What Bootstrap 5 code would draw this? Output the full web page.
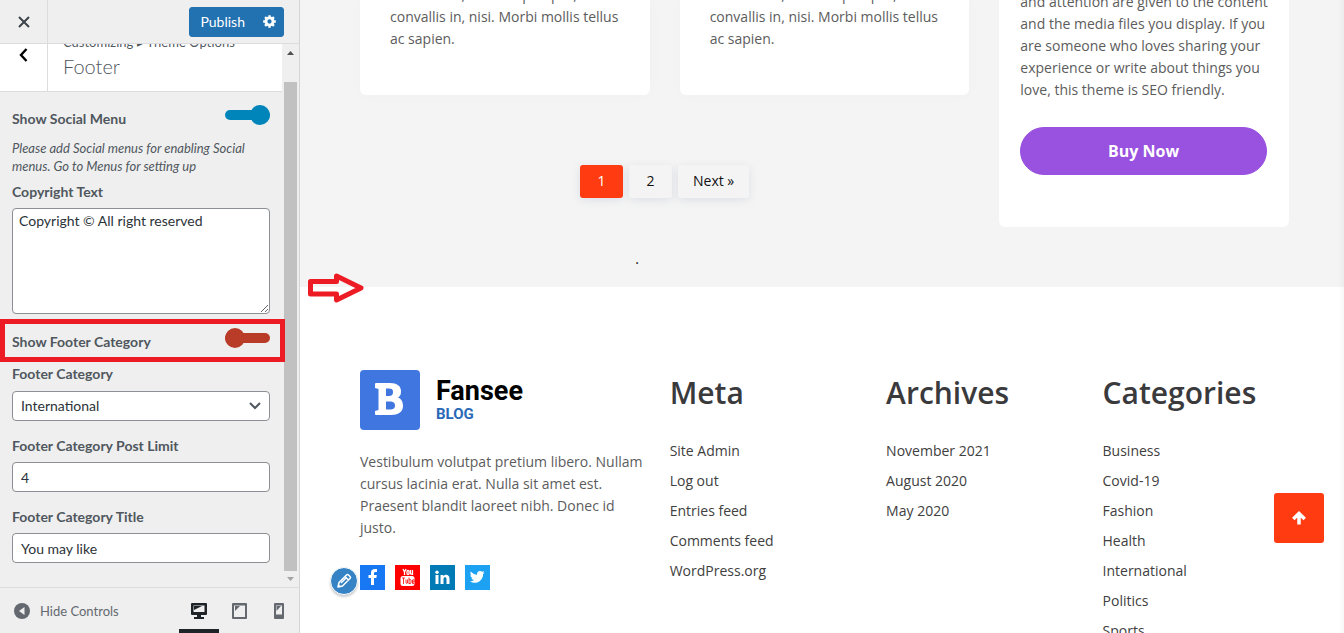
<!doctype html>
<html lang="en">
<head>
<meta charset="utf-8">
<meta name="viewport" content="width=device-width, initial-scale=1">
<title>Customize: Footer</title>
<link href="https://cdn.jsdelivr.net/npm/bootstrap@5.3.0/dist/css/bootstrap.min.css" rel="stylesheet">
<style>
body { font: 14px/22px "Open Sans", sans-serif; color: #5c5c5c; }
a { text-decoration: none; color: inherit; }
svg { display: block; }

/* Customizer panel */
.panel { flex: 0 0 300px; font: 14px/18px Lato, sans-serif; color: #50575e; background: #efefef; border-right: 1px solid #d5d5d5; }
.panel-head { height: 44px; border-bottom: 1px solid #dcdcde; padding-right: 15px; }
.side-btn { width: 48px; border: 0; border-right: 1px solid #dcdcde; background: transparent; color: #3c434a; padding: 0; display: flex; justify-content: center; }
.publish { --bs-btn-bg: #2271b1; --bs-btn-border-color: #2271b1; --bs-btn-border-radius: 3px; --bs-btn-color: #fff; --bs-btn-font-size: 14px; --bs-btn-padding-y: 0; height: 30px; line-height: 28px; }
.publish-text { --bs-btn-padding-x: 10px; }
.publish-gear { --bs-btn-padding-x: 7px; }
.section-title { height: 48px; background: #fff; border-bottom: 1px solid #dcdcde; }
.section-title h1 { font-size: 20px; line-height: 26px; font-weight: 300; }
.title-text { padding: 0 15px 8px; }
.crumbs { font-size: 13px; line-height: 18px; margin-bottom: 2px; }
.controls { padding: 13px 12px 0; }
.setting { font-weight: 700; display: block; margin: 0 0 7px; line-height: 18px; }
.toggle-label { margin: 0; padding-top: 5px; }
.note { font-size: 13px; font-style: italic; white-space: nowrap; margin: 11px 0 8px; }
.field.form-control, .field.form-select { font-size: 14px; line-height: 18px; border: 1px solid #8c8f94; border-radius: 4px; color: #2c3338; padding: 5px 8px; height: 30px; }
.field.form-select { margin-top: 8px; background-position: right 8px center; background-size: 12px 12px; --bs-form-select-bg-img: url("data:image/svg+xml,%3csvg xmlns='http://www.w3.org/2000/svg' viewBox='0 0 12 12'%3e%3cpath fill='none' stroke='%2350575e' stroke-width='2' d='M1 3l5 5 5-5'/%3e%3c/svg%3e"); }
textarea.field.form-control { height: 106px; padding: 3px 6px; resize: vertical; }
.toggle { appearance: none; position: relative; width: 45px; height: 20px; margin: 0; color: #b93c29; }
.toggle::before { content: ""; position: absolute; inset: 5px 0; border-radius: 5px; background: currentColor; }
.toggle::after { content: ""; position: absolute; inset: 0 auto 0 0; width: 20px; border-radius: 50%; background: currentColor; }
.toggle:checked { color: #0085ba; }
.toggle:checked::after { inset: 0 0 0 auto; }
.marked { height: 43px; padding-top: 9px; margin: 5px 0 3px; z-index: 2; }
.mark-box { position: absolute; inset: 0 -15px 0 -12px; border: 5px solid #ed1c24; pointer-events: none; }
.bar { width: 17px; color: #505050; }
.bar-thumb { width: 13px; background: #c1c1c1; }
.panel-foot { height: 46px; border-top: 1px solid #dcdcde; font-size: 13px; color: #646970; }
.hide-link { gap: 10px; padding-left: 14px; }
.device { width: 40px; border: 0; background: transparent; color: #646970; padding: 0; display: flex; justify-content: center; align-items: center; }
.device.chosen { color: #1d2327; box-shadow: inset 0 -4px #1d2327; }

/* Site preview */
.preview { min-width: 0; background: #fff; }
.preview::after { content: ""; position: absolute; inset: 0 0 0 auto; width: 6px; background: linear-gradient(90deg, transparent, rgba(0,0,0,.03)); }
.posts { background: #f4f4f4; height: 287px; padding: 0 55px 0 60px; }
.posts-grid { display: grid; grid-template-columns: repeat(3, minmax(0, 1fr)); column-gap: 30px; }
.posts-main { grid-column: span 2; }
.post-pair { display: grid; grid-template-columns: 1fr 1fr; column-gap: 30px; }
.tile { background: #fff; border-radius: 0 0 6px 6px; overflow: hidden; display: flex; flex-direction: column; justify-content: flex-end; white-space: nowrap; }
.tile p { margin: 0; }
.post-tile { height: 95px; padding: 0 30px 45px; box-shadow: 0 0 18px rgba(0,0,0,.02); }
.promo-tile { height: 227px; padding: 0 22px 52px 21px; }
.buy { --bs-btn-bg: #9951e0; --bs-btn-border-color: #9951e0; --bs-btn-color: #fff; --bs-btn-font-size: 16px; --bs-btn-font-weight: 700; --bs-btn-border-radius: 24px; height: 48px; margin-top: 26px; flex: none; }
.pages { gap: 6px; margin-top: 70px; }
.pages .page-item .page-link { font-size: 14px; line-height: 22px; padding: 5px 15px; height: 33px; min-width: 43px; margin: 0; text-align: center; border: 0; border-radius: 3px; background: #f4f4f4; color: #111; box-shadow: 0 2px 8px rgba(80,90,140,.13); }
.pages .page-item.active .page-link { background: #ff3b12; color: #fff; }
.stray { color: #111; text-align: center; margin: 53px 55px 0 0; line-height: 16px; }
.site-foot { display: grid; grid-template-columns: 3fr 2fr 2fr 2fr; column-gap: 30px; padding: 83px 55px 0 60px; }
.site-foot > * { min-width: 0; }
.logo-text { padding-top: 7px; }
.logo-name { font: 700 27px/28px Roboto, sans-serif; color: #000; }
.logo-sub { font: 700 15px/18px Roboto, sans-serif; color: #2a69b8; }
.about { white-space: nowrap; margin: 21px 0 26px; }
.site-foot h2 { font: 600 30px/36px "Open Sans", sans-serif; color: #3a3a3d; margin: 5px 0 29px; }
.links { list-style: none; padding: 0; margin: 0; display: grid; gap: 8px; color: #404040; }
.social { gap: 10px; }
.edit { position: absolute; left: -30px; top: 2px; width: 28px; height: 28px; border: 1px solid #fff; border-radius: 50%; background: #3582c4; padding: 0; box-shadow: 0 2px 2px rgba(60,67,74,.25); display: grid; place-items: center; }
.to-top { position: absolute; right: 20px; bottom: 90px; width: 50px; height: 50px; background: #ff3b12; border: 0; border-radius: 3px; display: grid; place-items: center; }
.pointer { position: absolute; left: 7px; top: 272px; z-index: 2; }
</style>
</head>
<body>
<div class="d-flex vh-100 overflow-hidden">
  <aside class="panel d-flex flex-column">
    <header class="panel-head d-flex flex-shrink-0">
      <button class="side-btn align-items-center" aria-label="Close"><svg width="12" height="12" viewBox="0 0 12 12" stroke="currentColor" stroke-width="2"><path d="M1 1l10 10M11 1L1 11"/></svg></button>
      <div class="btn-group ms-auto align-self-center">
        <button class="btn publish publish-text">Publish</button>
        <button class="btn publish publish-gear" aria-label="Publish settings"><svg width="13" height="13" viewBox="0 0 14 14"><circle cx="7" cy="7" r="3.8" fill="none" stroke="#fff" stroke-width="3"/><path stroke="#fff" stroke-width="2.6" d="M7 .2v3M7 10.800v3M.2 7h3M10.800 7h3M2.200 2.200l2 2M9.800 9.800l2 2M11.800 2.200l-2 2M4.200 9.800l-2 2"/></svg></button>
      </div>
    </header>

    <div class="d-flex flex-grow-1 overflow-hidden">
      <div class="flex-grow-1">
        <div class="section-title d-flex">
          <button class="side-btn align-items-start pt-1" aria-label="Back"><svg width="9" height="14" viewBox="0 0 9 14" fill="none" stroke="#000" stroke-width="2.400"><path d="M7.500 1L2 7l5.500 6"/></svg></button>
          <div class="title-text d-flex flex-column justify-content-end overflow-hidden">
            <span class="crumbs flex-shrink-0">Customizing ▸ Theme Options</span>
            <h1 class="mb-1 flex-shrink-0">Footer</h1>
          </div>
        </div>
        <form class="controls">
          <div class="d-flex justify-content-between">
            <label class="setting toggle-label" for="social">Show Social Menu</label>
            <input class="toggle" type="checkbox" id="social" checked>
          </div>
          <p class="note">Please add Social menus for enabling Social<br>menus. Go to Menus for setting up</p>
          <label class="setting" for="copy">Copyright Text</label>
          <textarea class="form-control field" id="copy">Copyright © All right reserved</textarea>
          <div class="marked position-relative d-flex justify-content-between">
            <label class="setting toggle-label" for="footcat">Show Footer Category</label>
            <input class="toggle" type="checkbox" id="footcat">
            <span class="mark-box"></span>
          </div>
          <label class="setting" for="cat">Footer Category</label>
          <select class="form-select field" id="cat"><option>International</option></select>
          <label class="setting mt-3" for="limit">Footer Category Post Limit</label>
          <input class="form-control field" id="limit" value="4">
          <label class="setting mt-3" for="title">Footer Category Title</label>
          <input class="form-control field" id="title" value="You may like">
        </form>
      </div>
      <div class="bar d-flex flex-column align-items-center flex-shrink-0 pt-1">
        <svg width="7" height="10" viewBox="0 0 7 10"><path fill="currentColor" d="M0 7l3.500-4L7 7z"/></svg>
        <div class="bar-thumb flex-grow-1 mt-4"></div>
        <svg width="7" height="16" viewBox="0 0 7 16"><path fill="#a3a3a3" d="M0 6l3.500 4L7 6z"/></svg>
      </div>
    </div>

    <footer class="panel-foot d-flex flex-shrink-0 align-items-stretch">
      <a href="#" class="hide-link d-flex align-items-center me-auto"><svg width="16" height="16" viewBox="0 0 16 16"><circle cx="8" cy="8" r="8" fill="#646970"/><path fill="#efefef" d="M10.500 4v8L5 8z"/></svg>Hide Controls</a>
      <button class="device chosen" aria-label="Desktop"><svg width="16" height="16" viewBox="0 0 16 16" fill="currentColor"><path fill-rule="evenodd" d="M0 1q0-1 1-1h14q1 0 1 1v10q0 1-1 1H1q-1 0-1-1zM2.500 2.500v6.500h11V2.500z"/><path d="M3 3h8L3 7zM6 12h4v2h3v2H3v-2h3z"/></svg></button>
      <button class="device" aria-label="Tablet"><svg width="15" height="16" viewBox="0 0 15 16" fill="currentColor"><path fill-rule="evenodd" d="M0 1q0-1 1-1h13q1 0 1 1v14q0 1-1 1H1q-1 0-1-1zM2 2.500v11.500h11V2.500z"/><path d="M3 3h5L3 8z"/></svg></button>
      <button class="device" aria-label="Mobile"><svg width="10" height="16" viewBox="0 0 10 16" fill="currentColor"><path fill-rule="evenodd" d="M0 1q0-1 1-1h8q1 0 1 1v14q0 1-1 1H1q-1 0-1-1zM2 2.500v9h6v-9z"/><path d="M2.500 3H7L2.500 8z"/></svg></button>
    </footer>
  </aside>

  <main class="preview flex-grow-1 position-relative overflow-hidden">
    <section class="posts">
      <div class="posts-grid">
        <div class="posts-main">
          <div class="post-pair">
            <article class="tile post-tile"><p>faucibus at, scelerisque quis,<br>convallis in, nisi. Morbi mollis tellus<br>ac sapien.</p></article>
            <article class="tile post-tile"><p>faucibus at, scelerisque quis,<br>convallis in, nisi. Morbi mollis tellus<br>ac sapien.</p></article>
          </div>
          <nav aria-label="Posts"><ul class="pagination pages justify-content-center mb-0">
            <li class="page-item active"><a class="page-link" href="#">1</a></li>
            <li class="page-item"><a class="page-link" href="#">2</a></li>
            <li class="page-item"><a class="page-link" href="#">Next »</a></li>
          </ul></nav>
          <p class="stray">.</p>
        </div>
        <aside class="tile promo-tile">
          <p>and attention are given to the content<br>and the media files you display. If you<br>are someone who loves sharing your<br>experience or write about things you<br>love, this theme is SEO friendly.</p>
          <button class="btn buy">Buy Now</button>
        </aside>
      </div>
    </section>

    <footer class="site-foot">
      <section>
        <a href="#" class="d-flex gap-3">
          <svg width="60" height="60" viewBox="0 0 60 60"><rect width="60" height="60" rx="4" fill="#4076e0"/><path fill="#fff" fill-rule="evenodd" d="M15 14q0-1 1-1h14c7 0 11 3 11 8 0 4-1 5-3 6.500 3 1 5 4 5 8.500 0 6-5 9-12 9H16q-1 0-1-1v-3l3.500-1V19L15 18zM26 18.500v7.500h3c3 0 4-1.500 4-4s-1-3.500-4-3.500zM26 31.500v8h4c3 0 5-1 5-4s-2-4-5-4z"/></svg>
          <span class="logo-text"><span class="logo-name d-block">Fansee</span><span class="logo-sub d-block">BLOG</span></span>
        </a>
        <p class="about">Vestibulum volutpat pretium libero. Nullam<br>cursus lacinia erat. Nulla sit amet est.<br>Praesent blandit laoreet nibh. Donec id<br>justo.</p>
        <div class="social d-flex position-relative">
          <button class="edit" aria-label="Edit"><svg width="16" height="16" viewBox="0 0 16 16" fill="none" stroke="#fff" stroke-width="1.500" stroke-linejoin="round"><path d="M2 14l1-4.500L10.500 2q1-1 2 0l1.500 1.500q1 1 0 2L6.500 13zM9 3.500L12.500 7M5 10l5-5M2 14l2-.5-1.500-1.500z"/></svg></button>
          <a href="#" aria-label="Facebook"><svg width="25" height="25" viewBox="0 0 25 25"><path fill="#1877f2" d="M0 0h25v25H0z"/><path fill="#fff" d="M11 20v-7H8.500v-3H11V8c0-3 1.500-4 4-4h2v3h-1.500C14.300 7 14 7.500 14 8.500V10h2.800l-.4 3H14v7z"/></svg></a>
          <a href="#" aria-label="YouTube"><svg width="25" height="25" viewBox="0 0 25 25"><path fill="#f00" d="M0 0h25v25H0z"/><path fill="none" stroke="#fff" stroke-width="1.300" d="M8 4l1.500 3v3M11 4L9.500 7M12 6.500q0-1 1-1t1 1v2q0 1-1 1t-1-1zM15.500 5v3.500q.2 1 2 .5M17.500 5v5"/><rect x="5.500" y="11" width="14" height="10" rx="2.500" fill="#fff"/><path fill="none" stroke="#f00" stroke-width=".8" d="M7 13h3M8.500 13v6M11 14.500V18q.5 1 1.500 0v-3.500M14 12.500V19M14 15q2-1 2 0v3q-.5 1-2 .5M19 17h-1.500v-2q1-1 1.500 0zM17.500 17v1.500H19"/></svg></a>
          <a href="#" aria-label="LinkedIn"><svg width="25" height="25" viewBox="0 0 25 25"><path fill="#007bb6" d="M0 0h25v25H0z"/><path fill="#fff" d="M5.500 10h3v9h-3zM10.500 10h2.800v1.300c1.500-2.400 6.200-2 6.200 2.200V19h-3v-5c0-2.500-3-2.200-3 0v5h-3z"/><circle cx="7" cy="7.200" r="1.700" fill="#fff"/></svg></a>
          <a href="#" aria-label="Twitter"><svg width="25" height="25" viewBox="0 0 25 25"><path fill="#1da1f2" d="M0 0h25v25H0z"/><path fill="#fff" d="M5.800 6.500c1.700 2 3.700 3 6.200 3.200-.4-3.500 3-4.700 5.200-2.900l2-.7-1.200 1.700 1.600-.4-1.500 1.500c.1 7-7.100 11-13.100 7.500 1.700 0 3-.4 4.100-1.300-1.300-.1-2.300-.9-2.700-2h1.300c-1.600-.5-2.300-1.600-2.400-3l1.300.3c-1.400-1.100-1.500-2.500-.8-3.900z"/></svg></a>
        </div>
      </section>
      <section><h2>Meta</h2><ul class="links"><li><a href="#">Site Admin</a></li><li><a href="#">Log out</a></li><li><a href="#">Entries feed</a></li><li><a href="#">Comments feed</a></li><li><a href="#">WordPress.org</a></li></ul></section>
      <section><h2>Archives</h2><ul class="links"><li><a href="#">November 2021</a></li><li><a href="#">August 2020</a></li><li><a href="#">May 2020</a></li></ul></section>
      <section><h2>Categories</h2><ul class="links"><li><a href="#">Business</a></li><li><a href="#">Covid-19</a></li><li><a href="#">Fashion</a></li><li><a href="#">Health</a></li><li><a href="#">International</a></li><li><a href="#">Politics</a></li><li><a href="#">Sports</a></li></ul></section>
    </footer>

    <button class="to-top" aria-label="Back to top"><svg width="14" height="14" viewBox="0 0 14 14" fill="none" stroke="#fff" stroke-width="3.500"><path d="M7 13.500V3M1.300 8L7 2.500 12.700 8"/></svg></button>
    <svg class="pointer" width="58" height="32" viewBox="0 0 58 32"><path fill="none" stroke="#ed1c24" stroke-width="5" stroke-linejoin="round" d="M3.500 9.500h26V4L54 16 29.500 28v-6h-26z"/></svg>
  </main>
</div>
<script src="https://cdn.jsdelivr.net/npm/bootstrap@5.3.0/dist/js/bootstrap.bundle.min.js"></script>
</body>
</html>
